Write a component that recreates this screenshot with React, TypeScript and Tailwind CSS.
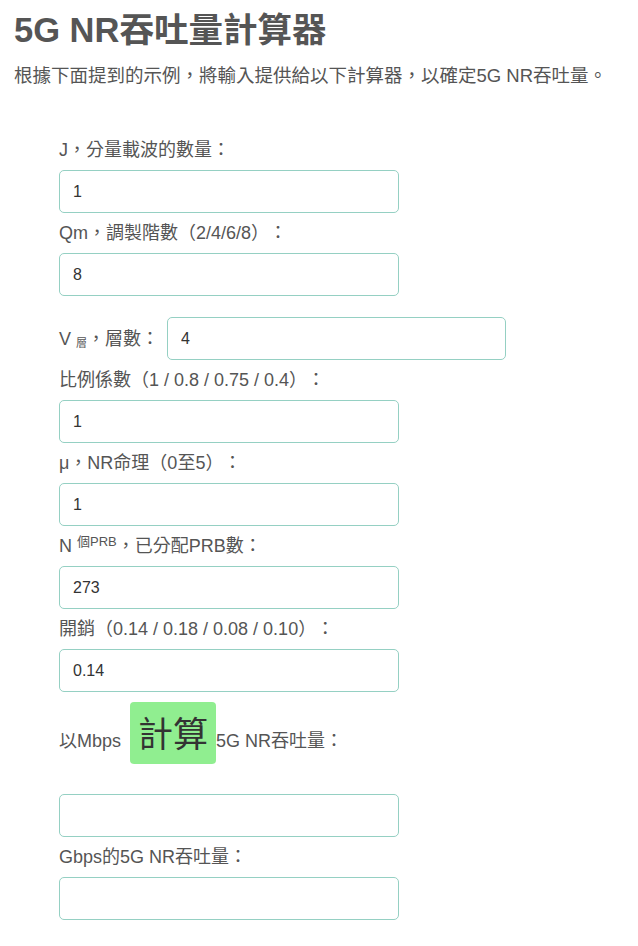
import React from 'react';

const font = { fontFamily: '"Liberation Sans", "Noto Sans CJK TC", sans-serif' };

function Field({ label, value }: { label: React.ReactNode; value?: string }) {
  return (
    <div>
      <label className="block my-[10px] text-[18px] leading-[20px] text-[#555]">{label}</label>
      <input
        readOnly
        value={value ?? ''}
        className="block w-[340px] h-[43px] px-[13px] rounded-[5px] border border-[#95d0c3] bg-white text-[16px] text-[#333] outline-none"
      />
    </div>
  );
}

export default function App() {
  return (
    <div
      className="w-[638px] min-h-[946px] bg-white px-[14px] pt-[10px] [text-spacing-trim:space-all]"
      style={font}
    >
      <h1 className="text-[34.5px] leading-[40px] font-bold text-[#555]">5G NR吞吐量計算器</h1>
      <p className="mt-[14px] text-[18.5px] leading-[24px] text-[#555] whitespace-nowrap">
        根據下面提到的示例，將輸入提供給以下計算器，以確定5G NR吞吐量。
      </p>

      <form className="pl-[45px] pt-[42px]">
        <Field label="J，分量載波的數量：" value="1" />
        <Field label="Qm，調製階數（2/4/6/8）：" value="8" />

        {/* layer count sits inline with its label */}
        <div className="mt-[21px] flex items-center gap-[8px]">
          <label className="text-[18px] leading-[20px] text-[#555] whitespace-nowrap">
            V <sub className="text-[11px]">層</sub>，層數：
          </label>
          <input
            readOnly
            value="4"
            className="w-[339px] h-[43px] px-[13px] rounded-[5px] border border-[#95d0c3] bg-white text-[16px] text-[#333] outline-none"
          />
        </div>

        <Field label="比例係數（1 / 0.8 / 0.75 / 0.4）：" value="1" />
        <Field label="μ，NR命理（0至5）：" value="1" />
        <Field
          label={
            <>
              N <sup className="text-[13px]">個PRB</sup>，已分配PRB數：
            </>
          }
          value="273"
        />
        <Field label="開銷（0.14 / 0.18 / 0.08 / 0.10）：" value="0.14" />

        <div className="mt-[10px] flex items-baseline text-[18px] text-[#555]">
          <span>以Mbps</span>
          <button
            type="button"
            className="ml-[9px] h-[62px] px-[8px] pt-[3px] rounded-[4px] bg-[#90ee90] text-[35px] leading-[59px] text-[#333]"
          >
            計算
          </button>
          <span>5G NR吞吐量：</span>
        </div>

        <div className="mt-[30px]">
          <input
            readOnly
            value=""
            className="block w-[340px] h-[43px] px-[13px] rounded-[5px] border border-[#95d0c3] bg-white text-[16px] text-[#333] outline-none"
          />
        </div>
        <Field label="Gbps的5G NR吞吐量：" />
      </form>
    </div>
  );
}
